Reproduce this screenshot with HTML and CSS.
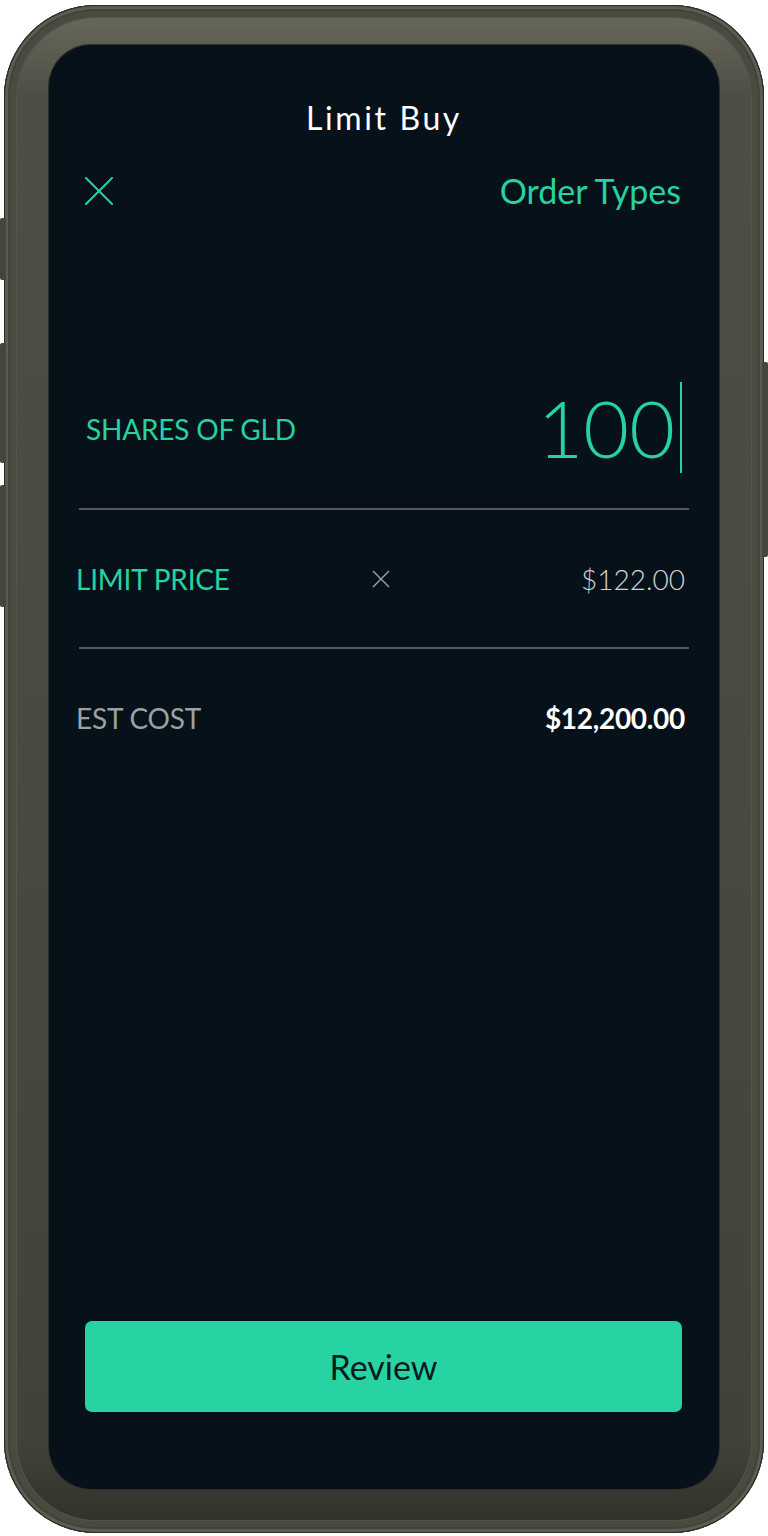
FILE: index.html
```html
<!DOCTYPE html>
<html lang="en">
<head>
<meta charset="utf-8">
<title>Limit Buy</title>
<link rel="stylesheet" href="styles.css">
</head>
<body>
<div class="phone">
  <span class="btn btn-l1"></span>
  <span class="btn btn-l2"></span>
  <span class="btn btn-l3"></span>
  <span class="btn btn-r1"></span>
  <div class="screen">
    <h1 class="title">Limit Buy</h1>
    <div class="header">
      <svg class="close" viewBox="0 0 28 28" width="28" height="28" aria-hidden="true">
        <path d="M1 1 L27 27 M27 1 L1 27" stroke="#27d2a1" stroke-width="2" stroke-linecap="round" fill="none"/>
      </svg>
      <span class="link">Order Types</span>
    </div>
    <div class="shares">
      <span class="label green">SHARES OF GLD</span>
      <span class="qty"><span class="num">100</span><span class="cursor"></span></span>
    </div>
    <div class="divider"></div>
    <div class="row price">
      <span class="label green">LIMIT PRICE</span>
      <svg class="clear" viewBox="0 0 18 18" width="18" height="18" aria-hidden="true">
        <path d="M1 1 L17 17 M17 1 L1 17" stroke="#9ea3a5" stroke-width="1.4" fill="none"/>
      </svg>
      <span class="value light">$122.00</span>
    </div>
    <div class="divider"></div>
    <div class="row cost">
      <span class="label gray">EST COST</span>
      <span></span>
      <span class="value bold">$12,200.00</span>
    </div>
    <button class="review">Review</button>
  </div>
</div>
</body>
</html>
```
FILE: styles.css
```css
html, body {
  margin: 0;
  padding: 0;
  background: #ffffff;
}
body {
  width: 768px;
  height: 1536px;
  font-family: "Lato", "Liberation Sans", sans-serif;
  padding-top: 5px;
  padding-left: 4px;
  box-sizing: border-box;
}
.phone {
  position: relative;
  width: 760px;
  height: 1528px;
  box-sizing: border-box;
  padding: 40px 45px 44px 45px;
  border-radius: 92px;
  background: linear-gradient(180deg, #6a6a5f 0%, #4e4e44 6%, #4a4a40 50%, #424239 94%, #303029 100%);
  box-shadow: inset 0 0 0 1px #2b2b24, inset 0 0 0 4px #5c5c51, inset 0 0 0 6px #42423a, inset 0 0 0 12px #4a4a40, inset 0 0 0 13px #55554b;
  display: flex;
}
.btn {
  position: absolute;
  width: 6px;
  background: #45453c;
  border-radius: 2px 0 0 2px;
}
.btn-l1 { left: -4px; top: 213px; height: 62px; }
.btn-l2 { left: -4px; top: 338px; height: 120px; }
.btn-l3 { left: -4px; top: 480px; height: 122px; }
.btn-r1 { right: -4px; top: 357px; height: 195px; border-radius: 0 2px 2px 0; }

.screen {
  flex: 1;
  background: #07111a;
  border-radius: 42px;
  display: flex;
  flex-direction: column;
  overflow: hidden;
  box-shadow: 0 0 0 1px #2e2e28;
}
.title {
  margin: 53px 0 0 0;
  font-size: 32px;
  line-height: 40px;
  font-weight: 400;
  color: #ffffff;
  text-align: center;
  letter-spacing: 2.6px;
}
.header {
  margin-top: 33px;
  height: 40px;
  padding: 0 38px 0 36px;
  display: flex;
  align-items: center;
  justify-content: space-between;
}
.close { display: block; }
.link {
  font-size: 34px;
  line-height: 40px;
  color: #27d2a1;
}
.shares {
  margin-top: 168px;
  height: 96px;
  padding: 0 37px 0 37px;
  display: flex;
  align-items: center;
  justify-content: space-between;
}
.label {
  font-size: 28px;
  line-height: 34px;
  letter-spacing: -0.2px;
}
.shares .label { padding-top: 4px; }
.green { color: #27d2a1; }
.gray { color: #9ca1a4; }
.qty {
  display: flex;
  align-items: center;
  height: 96px;
}
.num {
  font-size: 79px;
  line-height: 96px;
  font-weight: 300;
  color: #27d2a1;
  padding-top: 2px;
}
.cursor {
  width: 2px;
  height: 91px;
  margin-left: 5px;
  background: #27d2a1;
}
.divider {
  height: 2px;
  margin: 33px 30px 0 30px;
  background: #55595b;
}
.row {
  height: 137px;
  padding: 0 34px 0 27px;
  display: grid;
  grid-template-columns: 1fr auto 1fr;
  align-items: center;
}
.row + .divider { margin-top: 0; }
.clear { display: block; }
.value {
  justify-self: end;
  font-size: 28px;
  line-height: 34px;
}
.light {
  font-weight: 300;
  color: #cfd3d4;
}
.bold {
  font-weight: 700;
  color: #ffffff;
  letter-spacing: -0.3px;
}
.review {
  margin: auto 37px 77px 36px;
  height: 91px;
  border: none;
  border-radius: 7px;
  background: #27d3a3;
  color: #0a1a1e;
  font-family: "Lato", "Liberation Sans", sans-serif;
  font-size: 34px;
  font-weight: 400;
  padding: 0;
}
```
